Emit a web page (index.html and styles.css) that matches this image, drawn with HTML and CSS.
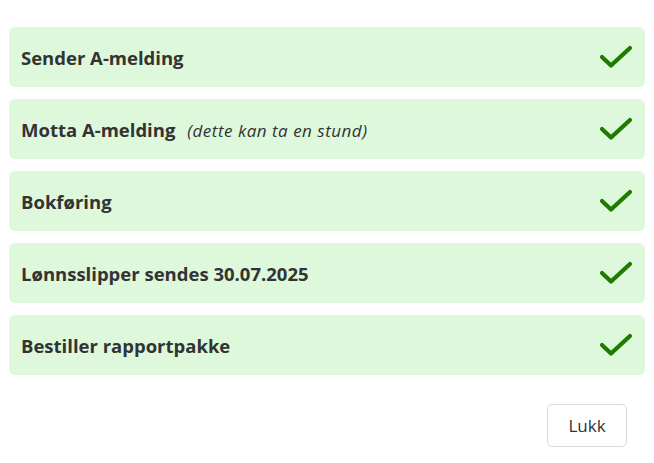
FILE: index.html
```html
<!DOCTYPE html>
<html lang="no">
<head>
    <meta charset="UTF-8">
    <meta name="viewport" content="width=device-width, initial-scale=1.0">
    <title>Sender A-melding</title>
    <link rel="stylesheet" href="styles.css">
</head>
<body>
    <div class="dialog">
        <ul class="steps">
            <li class="step">
                <span class="label">Sender A-melding</span>
                <svg class="check" viewBox="0 0 34 24"><path d="M3 12 L12 20.5 L31 3"/></svg>
            </li>
            <li class="step">
                <span class="label">Motta A-melding <em class="hint">(dette kan ta en stund)</em></span>
                <svg class="check" viewBox="0 0 34 24"><path d="M3 12 L12 20.5 L31 3"/></svg>
            </li>
            <li class="step">
                <span class="label">Bokføring</span>
                <svg class="check" viewBox="0 0 34 24"><path d="M3 12 L12 20.5 L31 3"/></svg>
            </li>
            <li class="step">
                <span class="label">Lønnsslipper sendes 30.07.2025</span>
                <svg class="check" viewBox="0 0 34 24"><path d="M3 12 L12 20.5 L31 3"/></svg>
            </li>
            <li class="step">
                <span class="label">Bestiller rapportpakke</span>
                <svg class="check" viewBox="0 0 34 24"><path d="M3 12 L12 20.5 L31 3"/></svg>
            </li>
        </ul>
        <div class="actions">
            <button class="close">Lukk</button>
        </div>
    </div>
</body>
</html>
```

FILE: styles.css
```css
body {
    font-family: "Open Sans", "Noto Sans", sans-serif;
    color: #333;
    margin: 0;
    background: #fff;
}
.dialog {
    padding: 27px 9px 0 9px;
}
.steps {
    list-style: none;
    margin: 0;
    padding: 0;
    display: flex;
    flex-direction: column;
    gap: 12px;
}
.step {
    display: flex;
    align-items: center;
    justify-content: space-between;
    height: 60px;
    padding: 0 12px;
    background-color: #ddf8db;
    border-radius: 6px;
}
.label {
    font-size: 18.5px;
    font-weight: 700;
}
.hint {
    font-size: 17px;
    font-weight: 400;
    letter-spacing: 0.5px;
    margin-left: 7px;
}
.check {
    width: 34px;
    height: 24px;
}
.check path {
    fill: none;
    stroke: #1e7b00;
    stroke-width: 4.2;
    stroke-linecap: round;
    stroke-linejoin: round;
}
.actions {
    display: flex;
    justify-content: flex-end;
    padding: 29px 18px 0 0;
}
.close {
    width: 80px;
    height: 43px;
    background: #fff;
    border: 1px solid #d9d9d9;
    border-radius: 5px;
    font-family: inherit;
    font-size: 17px;
    color: #333;
    cursor: pointer;
}
```
